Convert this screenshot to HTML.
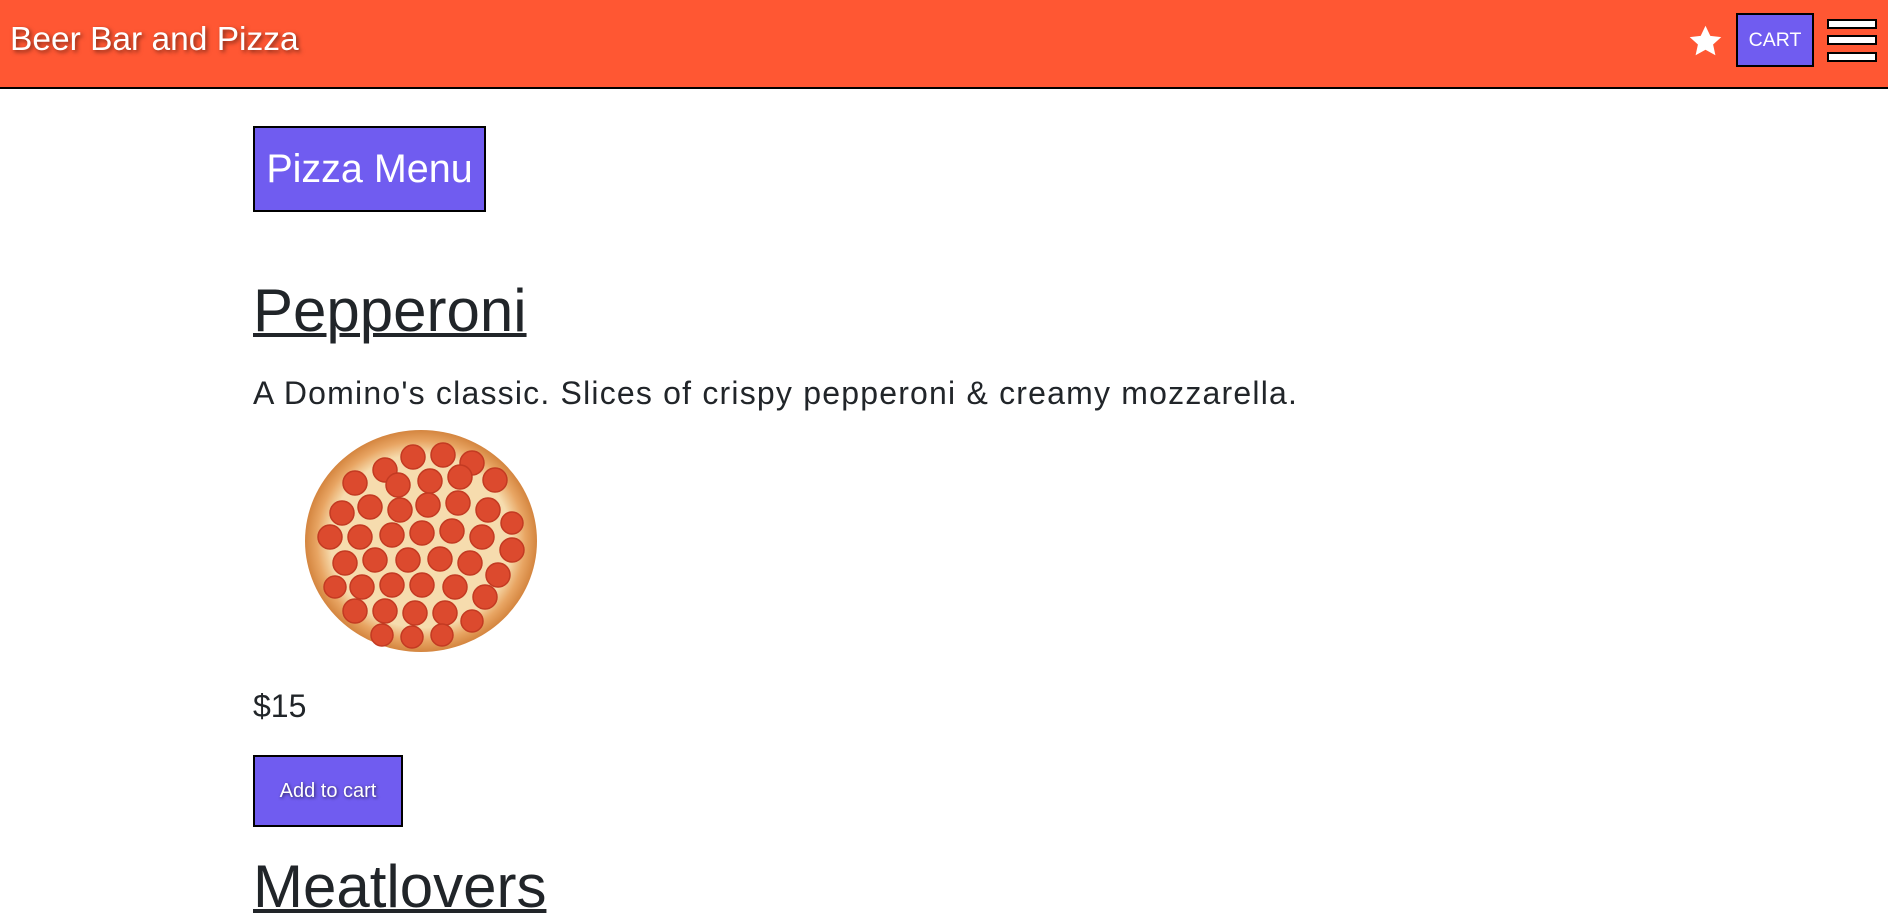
<!DOCTYPE html>
<html><head><meta charset="utf-8"><style>
*{margin:0;padding:0;box-sizing:border-box}
body{width:1888px;height:921px;overflow:hidden;background:#fff;font-family:"Liberation Sans",Arial,sans-serif;position:relative;color:#212529}
.hdr{position:absolute;left:0;top:0;width:1888px;height:89px;background:#ff5733;border-bottom:2px solid #000}
.title{position:absolute;left:10px;top:21px;font-size:33.5px;color:#fff;text-shadow:2px 2px 4px rgba(0,0,0,.5);white-space:nowrap}
.cart{position:absolute;left:1736px;top:13px;width:78px;height:54px;background:#705cf0;border:2px solid #000;color:#fff;font-size:19.5px;text-align:center;line-height:50px}
.bar{position:absolute;left:1827px;width:50px;height:10px;background:#fff;border:2px solid #000}
.menu{position:absolute;left:253px;top:126px;width:233px;height:86px;background:#705cf0;border:2px solid #000;color:#fff;font-size:39.5px;text-align:center;line-height:82px;white-space:nowrap}
.h{position:absolute;left:253px;font-size:60px;text-decoration:underline;text-decoration-thickness:4px;white-space:nowrap;line-height:1}
.p{position:absolute;left:253px;font-size:32px;white-space:nowrap;line-height:1}
.add{position:absolute;left:253px;top:755px;width:150px;height:72px;background:#705cf0;border:2px solid #000;color:#fff;font-size:20px;text-align:center;line-height:68px;text-shadow:1px 1px 3px rgba(0,0,0,.6);white-space:nowrap}
</style></head><body>
<div class="hdr">
<div class="title">Beer Bar and Pizza</div>
<svg style="position:absolute;left:1688px;top:24px" width="35" height="34" viewBox="0 0 24 23"><path d="M12 1l3.3 7 7.5.8-5.6 5.1 1.6 7.4L12 17.5l-6.8 3.8 1.6-7.4L1.2 8.8l7.5-.8z" fill="#fff"/></svg>
<div class="cart">CART</div>
<div class="bar" style="top:19px"></div>
<div class="bar" style="top:35px"></div>
<div class="bar" style="top:52px"></div>
</div>
<div class="menu">Pizza Menu</div>
<div class="h" style="top:281px">Pepperoni</div>
<div class="p" style="top:377px;letter-spacing:1.2px">A Domino's classic. Slices of crispy pepperoni &amp; creamy mozzarella.</div>
<svg style="position:absolute;left:300px;top:425px" width="240" height="232" viewBox="0 0 240 232">
<defs><radialGradient id="g" cx="50%" cy="50%" r="50%"><stop offset="78%" stop-color="#f6dcae"/><stop offset="90%" stop-color="#e8a563"/><stop offset="100%" stop-color="#d4853f"/></radialGradient></defs>
<ellipse cx="121" cy="116" rx="116" ry="111" fill="url(#g)"/>
<g fill="#dc4a2e" stroke="#c33a22" stroke-width="1.5">
<circle cx="85" cy="45" r="12"/><circle cx="113" cy="32" r="12"/><circle cx="143" cy="30" r="12"/><circle cx="172" cy="38" r="12"/>
<circle cx="55" cy="58" r="12"/><circle cx="98" cy="60" r="12"/><circle cx="130" cy="56" r="12"/><circle cx="160" cy="52" r="12"/><circle cx="195" cy="55" r="12"/>
<circle cx="42" cy="88" r="12"/><circle cx="70" cy="82" r="12"/><circle cx="100" cy="85" r="12"/><circle cx="128" cy="80" r="12"/><circle cx="158" cy="78" r="12"/><circle cx="188" cy="85" r="12"/><circle cx="212" cy="98" r="11"/>
<circle cx="30" cy="112" r="12"/><circle cx="60" cy="112" r="12"/><circle cx="92" cy="110" r="12"/><circle cx="122" cy="108" r="12"/><circle cx="152" cy="106" r="12"/><circle cx="182" cy="112" r="12"/><circle cx="212" cy="125" r="12"/>
<circle cx="45" cy="138" r="12"/><circle cx="75" cy="135" r="12"/><circle cx="108" cy="135" r="12"/><circle cx="140" cy="134" r="12"/><circle cx="170" cy="138" r="12"/><circle cx="198" cy="150" r="12"/>
<circle cx="35" cy="162" r="11"/><circle cx="62" cy="162" r="12"/><circle cx="92" cy="160" r="12"/><circle cx="122" cy="160" r="12"/><circle cx="155" cy="162" r="12"/><circle cx="185" cy="172" r="12"/>
<circle cx="55" cy="186" r="12"/><circle cx="85" cy="186" r="12"/><circle cx="115" cy="188" r="12"/><circle cx="145" cy="188" r="12"/><circle cx="172" cy="196" r="11"/>
<circle cx="82" cy="210" r="11"/><circle cx="112" cy="212" r="11"/><circle cx="142" cy="210" r="11"/>
</g></svg>
<div class="p" style="top:690px">$15</div>
<div class="add">Add to cart</div>
<div class="h" style="top:857px">Meatlovers</div>
</body></html>
